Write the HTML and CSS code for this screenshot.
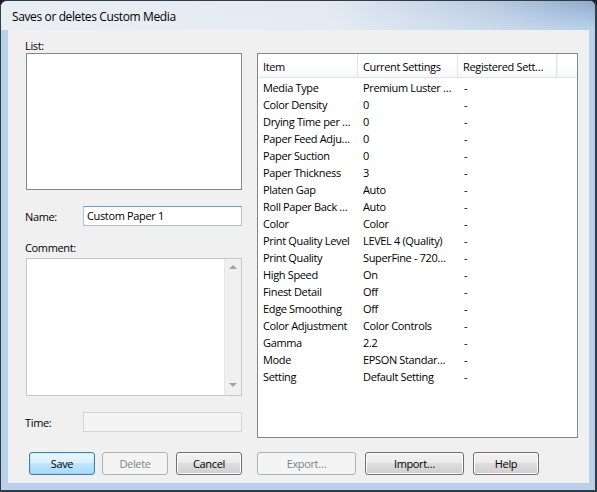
FILE: index.html
```html
<!DOCTYPE html>
<html lang="en">
<head>
<meta charset="utf-8">
<title>Saves or deletes Custom Media</title>
<link rel="stylesheet" href="styles.css">
</head>
<body>
<div class="window">
  <div class="titlebar"><span class="title">Saves or deletes Custom Media</span></div>
  <div class="client">
    <div class="main">
      <div class="left">
        <div class="lbl">List:</div>
        <div class="box listbox"></div>
        <div class="field">
          <span class="field-label">Name:</span>
          <div class="input name">Custom Paper 1</div>
        </div>
        <div class="lbl comment-lbl">Comment:</div>
        <div class="box comment">
          <div class="vscroll">
            <span class="arr up"></span>
            <span class="arr down"></span>
          </div>
        </div>
        <div class="field">
          <span class="field-label">Time:</span>
          <div class="input disabled"></div>
        </div>
      </div>
      <div class="listview">
        <div class="lv-head">
          <div class="hcol">Item</div>
          <div class="hcol">Current Settings</div>
          <div class="hcol">Registered Sett…</div>
          <div class="hrest"></div>
        </div>
        <div class="lv-body">
          <div class="row"><span>Media Type</span><span>Premium Luster …</span><span>-</span></div>
          <div class="row"><span>Color Density</span><span>0</span><span>-</span></div>
          <div class="row"><span>Drying Time per …</span><span>0</span><span>-</span></div>
          <div class="row"><span>Paper Feed Adju…</span><span>0</span><span>-</span></div>
          <div class="row"><span>Paper Suction</span><span>0</span><span>-</span></div>
          <div class="row"><span>Paper Thickness</span><span>3</span><span>-</span></div>
          <div class="row"><span>Platen Gap</span><span>Auto</span><span>-</span></div>
          <div class="row"><span>Roll Paper Back …</span><span>Auto</span><span>-</span></div>
          <div class="row"><span>Color</span><span>Color</span><span>-</span></div>
          <div class="row"><span>Print Quality Level</span><span>LEVEL 4 (Quality)</span><span>-</span></div>
          <div class="row"><span>Print Quality</span><span>SuperFine - 720…</span><span>-</span></div>
          <div class="row"><span>High Speed</span><span>On</span><span>-</span></div>
          <div class="row"><span>Finest Detail</span><span>Off</span><span>-</span></div>
          <div class="row"><span>Edge Smoothing</span><span>Off</span><span>-</span></div>
          <div class="row"><span>Color Adjustment</span><span>Color Controls</span><span>-</span></div>
          <div class="row"><span>Gamma</span><span>2.2</span><span>-</span></div>
          <div class="row"><span>Mode</span><span>EPSON Standar…</span><span>-</span></div>
          <div class="row"><span>Setting</span><span>Default Setting</span><span>-</span></div>
        </div>
      </div>
    </div>
    <div class="buttons">
      <button class="btn default b-save">Save</button>
      <button class="btn disabled-btn b-delete" disabled>Delete</button>
      <button class="btn b-cancel">Cancel</button>
      <button class="btn disabled-btn wide b-export" disabled>Export…</button>
      <button class="btn wide b-import">Import…</button>
      <button class="btn b-help">Help</button>
    </div>
  </div>
</div>
</body>
</html>
```
FILE: styles.css
```css
html, body {
  margin: 0;
  padding: 0;
  background: #1f1f1f;
}

body {
  font-family: "Open Sans", "Noto Sans", sans-serif;
  font-size: 11px;
  letter-spacing: -0.35px;
  color: #000;
}

.window {
  box-sizing: border-box;
  width: 597px;
  height: 492px;
  border-style: solid;
  border-color: #333b45;
  border-width: 1px 2px 2px 1px;
  border-radius: 7px 7px 0 0;
  background: #b9d1ea;
  display: flex;
  flex-direction: column;
  overflow: hidden;
}

.titlebar {
  height: 29px;
  flex: none;
  background:
    linear-gradient(to right, rgba(236, 240, 245, 0.97) 0%, rgba(233, 238, 244, 0.93) 55%, rgba(215, 226, 239, 0.6) 82%, rgba(200, 216, 236, 0) 100%),
    linear-gradient(#8eaacc, #b9d1ea);
  display: flex;
  align-items: center;
  padding-left: 11px;
}

.title {
  font-size: 12px;
  letter-spacing: -0.38px;
  color: #000;
  padding-top: 1px;
}

.client {
  flex: 1;
  margin: 0 6px 7px 7px;
  background: #f0f0f0;
  display: flex;
  flex-direction: column;
  padding: 8px 0 0 17px;
}

.main {
  display: flex;
}

.left {
  width: 217px;
  display: flex;
  flex-direction: column;
}

.lbl {
  height: 15px;
  line-height: 15px;
}

.comment-lbl {
  margin-top: 14px;
  margin-bottom: 3px;
}

.box {
  box-sizing: border-box;
  margin-left: 1px;
  width: 216px;
  background: #fff;
}

.listbox {
  height: 137px;
  border: 1px solid #828790;
}

.comment {
  height: 138px;
  border: 1px solid #c4c7cc;
  display: flex;
  justify-content: flex-end;
}

.vscroll {
  width: 17px;
  background: #f0f0f0;
  border-left: 1px solid #e6e6e6;
  display: flex;
  flex-direction: column;
  justify-content: space-between;
  align-items: center;
  padding: 6px 0 8px;
  box-sizing: border-box;
}

.arr {
  width: 0;
  height: 0;
  border-left: 4px solid transparent;
  border-right: 4px solid transparent;
}

.arr.up {
  border-bottom: 4px solid #a3a3a3;
}

.arr.down {
  border-top: 4px solid #a3a3a3;
}

.field {
  display: flex;
  align-items: center;
  margin-top: 16px;
  height: 20px;
}

.field-label {
  width: 58px;
}

.input {
  box-sizing: border-box;
  width: 159px;
  height: 20px;
  line-height: 18px;
  padding-left: 3px;
  background: #fff;
  border: 1px solid #a5c3e0;
  border-top-color: #6f9dc8;
}

.input.disabled {
  background: #f4f4f4;
  border: 1px solid #d5d5d5;
}

.listview {
  box-sizing: border-box;
  margin-left: 15px;
  margin-top: 15px;
  width: 321px;
  height: 385px;
  border: 1px solid #828790;
  background: #fff;
}

.lv-head {
  display: flex;
  height: 23px;
  border-bottom: 1px solid #e3e5e8;
  background: linear-gradient(#ffffff, #ffffff 55%, #f6f7f9);
}

.hcol {
  box-sizing: border-box;
  width: 100px;
  padding-left: 5px;
  padding-top: 4px;
  line-height: 17px;
  border-right: 1px solid #e3e5e8;
  white-space: nowrap;
}

.hcol:nth-child(3) {
  width: 99px;
}

.hrest {
  flex: 1;
  border-left: 1px solid #f2f3f5;
}

.lv-body {
  padding-top: 1px;
}

.row {
  display: grid;
  grid-template-columns: 100px 100px 99px;
  height: 17px;
  line-height: 17px;
}

.row span {
  padding-left: 5px;
  white-space: nowrap;
  overflow: hidden;
}

.row span:nth-child(3) {
  padding-left: 6px;
}

.buttons {
  display: flex;
  margin-top: 14px;
}

.btn {
  box-sizing: border-box;
  width: 66px;
  height: 23px;
  padding: 0;
  font-family: inherit;
  font-size: 11px;
  letter-spacing: -0.35px;
  color: #000;
  border: 1px solid #707070;
  border-radius: 3px;
  background: linear-gradient(#f2f2f2, #ebebeb 50%, #dddddd 50%, #cfcfcf);
  box-shadow: inset 0 0 0 1px #fcfcfc;
}

.btn.wide {
  width: 99px;
}

.btn.default {
  border-color: #3c7fb1;
  background: linear-gradient(#eaf6fd, #d9f0fc 50%, #bee6fd 50%, #a7d9f5);
  box-shadow: inset 0 0 0 1px #48d3fb33;
}

.btn.disabled-btn {
  color: #838383;
  border-color: #adb2b5;
  background: #f4f4f4;
  box-shadow: none;
}

.b-save { margin-left: 4px; }
.b-delete { margin-left: 7px; }
.b-cancel { margin-left: 8px; }
.b-export { margin-left: 15px; }
.b-import { margin-left: 9px; }
.b-help { margin-left: 9px; }
```
